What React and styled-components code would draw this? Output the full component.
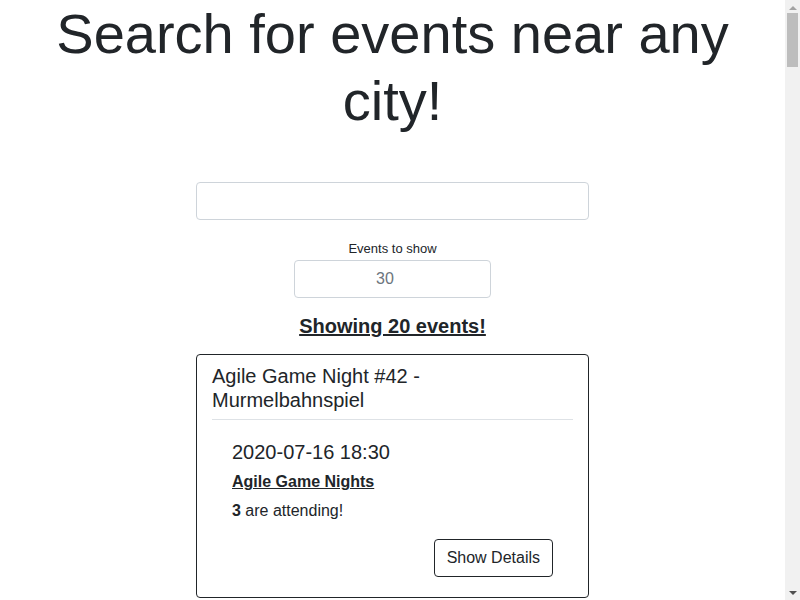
import styled, { createGlobalStyle } from "styled-components";

const events = [
  { id: 1, name: "Agile Game Night #42 - Murmelbahnspiel", date: "2020-07-16 18:30", group: "Agile Game Nights", yes: 3 },
  { id: 2, name: "Online JavaScript Meetup", date: "2020-07-17 19:00", group: "JS Berlin", yes: 48 },
  { id: 3, name: "Sunday Morning Run in the Park", date: "2020-07-19 09:00", group: "Runners Club", yes: 12 },
  { id: 4, name: "Board Games & Beer", date: "2020-07-20 18:00", group: "Tabletop Friends", yes: 9 },
  { id: 5, name: "Photography Walk: Old Town", date: "2020-07-21 17:30", group: "City Photo Walks", yes: 21 },
  { id: 6, name: "React Study Group", date: "2020-07-22 18:30", group: "Frontend Learners", yes: 15 },
  { id: 7, name: "Language Exchange Evening", date: "2020-07-23 19:00", group: "Tandem Talks", yes: 33 },
  { id: 8, name: "Yoga by the River", date: "2020-07-24 08:00", group: "Outdoor Yoga", yes: 7 },
  { id: 9, name: "Startup Pitch Night", date: "2020-07-25 18:00", group: "Founders Circle", yes: 56 },
  { id: 10, name: "Hiking Trip to the Lakes", date: "2020-07-26 08:30", group: "Weekend Hikers", yes: 18 },
  { id: 11, name: "Python Beginners Workshop", date: "2020-07-27 18:00", group: "PyLadies", yes: 25 },
  { id: 12, name: "Salsa Social Night", date: "2020-07-28 20:00", group: "Dance Together", yes: 40 },
  { id: 13, name: "Book Club: Summer Reads", date: "2020-07-29 19:00", group: "Readers Corner", yes: 6 },
  { id: 14, name: "Cycling Tour Around the City", date: "2020-07-30 10:00", group: "Bike Buddies", yes: 14 },
  { id: 15, name: "UX Design Critique", date: "2020-07-31 18:30", group: "Design Meetup", yes: 19 },
  { id: 16, name: "Open Mic Comedy", date: "2020-08-01 20:30", group: "Laugh Factory", yes: 27 },
  { id: 17, name: "Cloud Native Talks", date: "2020-08-03 18:00", group: "DevOps Community", yes: 38 },
  { id: 18, name: "Chess in the Cafe", date: "2020-08-04 17:00", group: "Chess Lovers", yes: 5 },
  { id: 19, name: "Vegan Cooking Class", date: "2020-08-05 18:30", group: "Green Kitchen", yes: 11 },
  { id: 20, name: "Agile Coffee Morning", date: "2020-08-06 08:30", group: "Agile Game Nights", yes: 8 },
];

const GlobalStyle = createGlobalStyle`
  body {
    margin: 0;
    font-family: "Liberation Sans", Arial, sans-serif;
    font-size: 16px;
    line-height: 1.5;
    color: #212529;
    background: #fff;
  }
  * {
    box-sizing: border-box;
  }
`;

export default function App() {
  return (
    <>
      <GlobalStyle />
      <Page>
        <Title>Search for events near any city!</Title>
        <SearchInput type="text" />
        <NumberBlock>
          <Label>Events to show</Label>
          <NumberInput type="number" defaultValue={30} />
        </NumberBlock>
        <Count>Showing 20 events!</Count>
        <EventList>
          {events.map((e) => (
            <Card key={e.id}>
              <CardTitle>{e.name}</CardTitle>
              <Divider />
              <CardBody>
                <Date>{e.date}</Date>
                <Group href="#">{e.group}</Group>
                <Attending>
                  <b>{e.yes}</b> are attending!
                </Attending>
                <ButtonRow>
                  <DetailsButton>Show Details</DetailsButton>
                </ButtonRow>
              </CardBody>
            </Card>
          ))}
        </EventList>
      </Page>
      <Scrollbar>
        <Arrow $up />
        <Thumb />
        <Track />
        <Arrow />
      </Scrollbar>
    </>
  );
}

const Page = styled.div`
  display: flex;
  flex-direction: column;
  align-items: center;
  text-align: center;
  margin-right: 15px;
  padding-bottom: 48px;
`;

const Title = styled.h1`
  margin: 0;
  font-size: 56px;
  font-weight: 400;
  line-height: 1.2;
  width: 100%;
  padding: 0 40px;
`;

const SearchInput = styled.input`
  margin-top: 48px;
  width: 393px;
  height: 38px;
  padding: 6px 12px;
  font-size: 16px;
  font-family: inherit;
  border: 1px solid #ced4da;
  border-radius: 4px;
  color: #495057;
`;

const NumberBlock = styled.div`
  display: flex;
  flex-direction: column;
  align-items: center;
  margin-top: 20px;
`;

const Label = styled.label`
  font-size: 13px;
  line-height: 20px;
  margin-top: -1px;
  margin-bottom: 1px;
`;

const NumberInput = styled.input`
  width: 197px;
  height: 38px;
  padding: 6px 12px;
  font-size: 16px;
  font-family: inherit;
  text-align: center;
  color: #6c757d;
  border: 1px solid #ced4da;
  border-radius: 4px;
  &::-webkit-inner-spin-button {
    opacity: 0;
    width: 15px;
  }
`;

const Count = styled.h2`
  margin: 16px 0 0;
  font-size: 20px;
  line-height: 24px;
  font-weight: 700;
  text-decoration: underline;
`;

const EventList = styled.div`
  display: flex;
  flex-direction: column;
  gap: 48px;
  margin-top: 16px;
`;

const Card = styled.div`
  width: 393px;
  border: 1px solid #212529;
  border-radius: 4px;
  padding: 9px 15px 20px;
  text-align: left;
`;

const CardTitle = styled.h3`
  margin: 0;
  font-size: 20px;
  line-height: 24px;
  font-weight: 400;
`;

const Divider = styled.hr`
  margin: 7px 0 0;
  border: 0;
  border-top: 1px solid #dee2e6;
`;

const CardBody = styled.div`
  display: flex;
  flex-direction: column;
  align-items: flex-start;
  padding: 20px 20px 0;
`;

const Date = styled.div`
  font-size: 20px;
  line-height: 24px;
`;

const Group = styled.a`
  margin-top: 6px;
  font-weight: 700;
  color: #212529;
  text-decoration: underline;
  line-height: 24px;
`;

const Attending = styled.div`
  margin-top: 5px;
  line-height: 24px;
`;

const ButtonRow = styled.div`
  align-self: stretch;
  display: flex;
  justify-content: flex-end;
  margin-top: 16px;
`;

const DetailsButton = styled.button`
  height: 38px;
  padding: 6px 12px;
  font-family: inherit;
  font-size: 16px;
  color: #212529;
  background: #fff;
  border: 1px solid #212529;
  border-radius: 4px;
`;

/* browser-style vertical scrollbar drawn over the right edge */
const Scrollbar = styled.div`
  position: fixed;
  top: 0;
  right: 0;
  width: 15px;
  height: 100vh;
  background: #f1f1f1;
  display: flex;
  flex-direction: column;
  align-items: center;
`;

const Arrow = styled.div`
  width: 15px;
  height: 15px;
  display: flex;
  align-items: center;
  justify-content: center;
  &::after {
    content: "";
    width: 0;
    height: 0;
    border-left: 4px solid transparent;
    border-right: 4px solid transparent;
    ${(p) =>
      p.$up
        ? "border-bottom: 4px solid #a3a3a3;"
        : "border-top: 4px solid #505050;"}
  }
`;

const Thumb = styled.div`
  width: 11px;
  height: 54px;
  margin-top: -2px;
  background: #bdbdbd;
`;

const Track = styled.div`
  flex: 1;
`;
